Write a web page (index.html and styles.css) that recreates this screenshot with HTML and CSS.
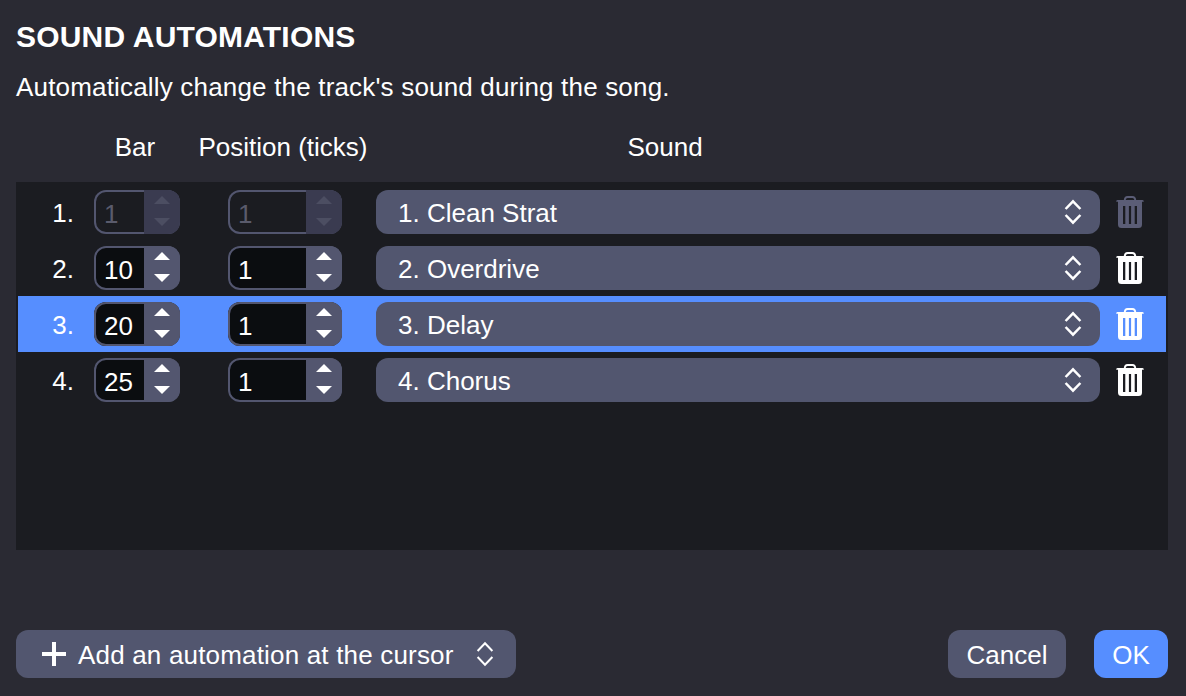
FILE: index.html
```
<!DOCTYPE html>
<html lang="en">

<head>
    <meta charset="UTF-8">
    <meta name="viewport" content="width=device-width, initial-scale=1.0">
    <title>Sound automations</title>
    <link rel="stylesheet" href="styles.css">
</head>

<body>
    <!-- shared icons -->
    <svg class="icons" width="0" height="0">
        <symbol id="updown" viewBox="0 0 18 26">
            <path d="M1.6 10 L9 2.3 L16.4 10 M1.6 16 L9 23.7 L16.4 16" fill="none" stroke="currentColor" />
        </symbol>
        <symbol id="arrows" viewBox="0 0 16 30">
            <path d="M0 8 L8 0 L16 8 Z M0 22 L16 22 L8 30 Z" fill="currentColor" />
        </symbol>
        <symbol id="trash" viewBox="0 0 28 32">
            <path d="M8.7 5 C8.7 2 9.7 1 11.7 1 H16.3 C18.3 1 19.3 2 19.3 5" fill="none" stroke="currentColor" stroke-width="1.9" />
            <path d="M1.5 4 H26.5 Q28 4 27.8 5.8 H26 V28.5 Q26 32 22.5 32 H5.5 Q2 32 2 28.5 V5.8 H0.2 Q0 4 1.5 4 Z M7 10 V28 H9.3 V10 Z M12.9 10 V28 H15.1 V10 Z M18.7 10 V28 H21 V10 Z" fill="currentColor" fill-rule="evenodd" />
        </symbol>
        <symbol id="plus" viewBox="0 0 24 24">
            <path d="M10 0 H14 V10 H24 V14 H14 V24 H10 V14 H0 V10 H10 Z" fill="currentColor" />
        </symbol>
    </svg>

    <div class="dialog">
        <h1>SOUND AUTOMATIONS</h1>
        <p class="desc">Automatically change the track's sound during the song.</p>

        <div class="head">
            <span class="headBar">Bar</span>
            <span class="headPos">Position (ticks)</span>
            <span class="headSound">Sound</span>
        </div>

        <ul class="list">
            <li class="row disabled">
                <span class="num">1.</span>
                <div class="spin bar"><span class="value">1</span><span class="step"><svg><use href="#arrows" /></svg></span></div>
                <div class="spin pos"><span class="value">1</span><span class="step"><svg><use href="#arrows" /></svg></span></div>
                <div class="select"><span>1. Clean Strat</span><svg class="updown"><use href="#updown" /></svg></div>
                <svg class="trash"><use href="#trash" /></svg>
            </li>
            <li class="row">
                <span class="num">2.</span>
                <div class="spin bar"><span class="value">10</span><span class="step"><svg><use href="#arrows" /></svg></span></div>
                <div class="spin pos"><span class="value">1</span><span class="step"><svg><use href="#arrows" /></svg></span></div>
                <div class="select"><span>2. Overdrive</span><svg class="updown"><use href="#updown" /></svg></div>
                <svg class="trash"><use href="#trash" /></svg>
            </li>
            <li class="row active">
                <span class="num">3.</span>
                <div class="spin bar"><span class="value">20</span><span class="step"><svg><use href="#arrows" /></svg></span></div>
                <div class="spin pos"><span class="value">1</span><span class="step"><svg><use href="#arrows" /></svg></span></div>
                <div class="select"><span>3. Delay</span><svg class="updown"><use href="#updown" /></svg></div>
                <svg class="trash"><use href="#trash" /></svg>
            </li>
            <li class="row">
                <span class="num">4.</span>
                <div class="spin bar"><span class="value">25</span><span class="step"><svg><use href="#arrows" /></svg></span></div>
                <div class="spin pos"><span class="value">1</span><span class="step"><svg><use href="#arrows" /></svg></span></div>
                <div class="select"><span>4. Chorus</span><svg class="updown"><use href="#updown" /></svg></div>
                <svg class="trash"><use href="#trash" /></svg>
            </li>
        </ul>

        <div class="footer">
            <button class="btn addBtn">
                <svg class="plus"><use href="#plus" /></svg>
                <span class="addText">Add an automation at the cursor</span>
                <svg class="updown"><use href="#updown" /></svg>
            </button>
            <button class="btn cancelBtn">Cancel</button>
            <button class="btn okBtn">OK</button>
        </div>
    </div>
</body>

</html>
```
FILE: styles.css
```
* {
    padding: 0px;
    margin: 0px;
    list-style: none;
    box-sizing: border-box;
}

body {
    background-color: #2a2a33;
    color: #fff;
    font-family: "Liberation Sans", Helvetica, Arial, sans-serif;
    font-size: 26px;
    line-height: 30px;
    white-space: nowrap;
    overflow: hidden;
}

svg {
    display: block;
    flex: none;
}

.icons {
    position: absolute;
}

.dialog {
    display: flex;
    flex-direction: column;
    width: 1186px;
    height: 696px;
    padding: 19px 18px 18px 16px;
}

h1 {
    font-size: 30px;
    line-height: 36px;
    letter-spacing: 0.2px;
}

.desc {
    margin-top: 17px;
    letter-spacing: 0.18px;
}

.head {
    display: flex;
    margin-top: 30px;
    padding-left: 78px;
    text-align: center;
}

.headBar {
    width: 82px;
}

.headPos {
    width: 214px;
}

.headSound {
    width: 550px;
}

.list {
    height: 368px;
    margin-top: 20px;
    padding: 2px;
    background-color: #1b1c21;
}

.row {
    display: flex;
    align-items: center;
    height: 56px;
}

.num {
    width: 56px;
    padding-top: 2px;
    text-align: right;
}

/* the stepper covers the outline on its side */
.spin {
    display: flex;
    height: 44px;
    border-radius: 12px;
    background-color: #0b0d10;
    box-shadow: inset 0 0 0 2px #53566f;
    overflow: hidden;
}

.bar {
    width: 86px;
    margin-left: 20px;
}

.pos {
    width: 114px;
    margin-left: 48px;
}

.value {
    flex: 1;
    padding: 9px 0 0 10px;
}

.step {
    width: 36px;
    padding: 6px 0 0 10px;
    background-color: #53566f;
}

.step svg {
    width: 16px;
    height: 30px;
}

.select {
    display: flex;
    align-items: center;
    justify-content: space-between;
    width: 724px;
    height: 44px;
    margin: 0 16px 0 34px;
    padding: 2px 18px 0 22px;
    border-radius: 12px;
    background-color: #52566f;
}

.updown {
    width: 18px;
    height: 26px;
    stroke-width: 2.5;
}

.select .updown {
    margin-top: -2px;
}

.trash {
    width: 28px;
    height: 32px;
}

.active {
    background-color: #568eff;
}

.disabled .spin {
    background-color: #1b1c21;
    color: #5a5b6c;
}

.disabled .step {
    background-color: #3a3b50;
    color: #4c4e62;
}

.disabled .trash {
    color: #5b5d76;
}

.footer {
    display: flex;
    height: 48px;
    margin-top: auto;
}

.btn {
    display: flex;
    align-items: center;
    justify-content: center;
    height: 48px;
    padding-top: 2px;
    border: none;
    border-radius: 12px;
    background-color: #52566f;
    color: #fff;
    font: inherit;
}

.addBtn {
    justify-content: flex-start;
    width: 500px;
    padding-left: 26px;
    margin-right: auto;
}

.plus {
    width: 24px;
    height: 24px;
    margin: -2px 12px 0 0;
}

.addText {
    width: 398px;
    text-align: left;
    letter-spacing: 0.18px;
}

.addBtn .updown {
    margin-top: -2px;
    stroke-width: 2;
}

.cancelBtn {
    width: 118px;
    margin-right: 28px;
}

.okBtn {
    width: 74px;
    background-color: #568eff;
}
```
